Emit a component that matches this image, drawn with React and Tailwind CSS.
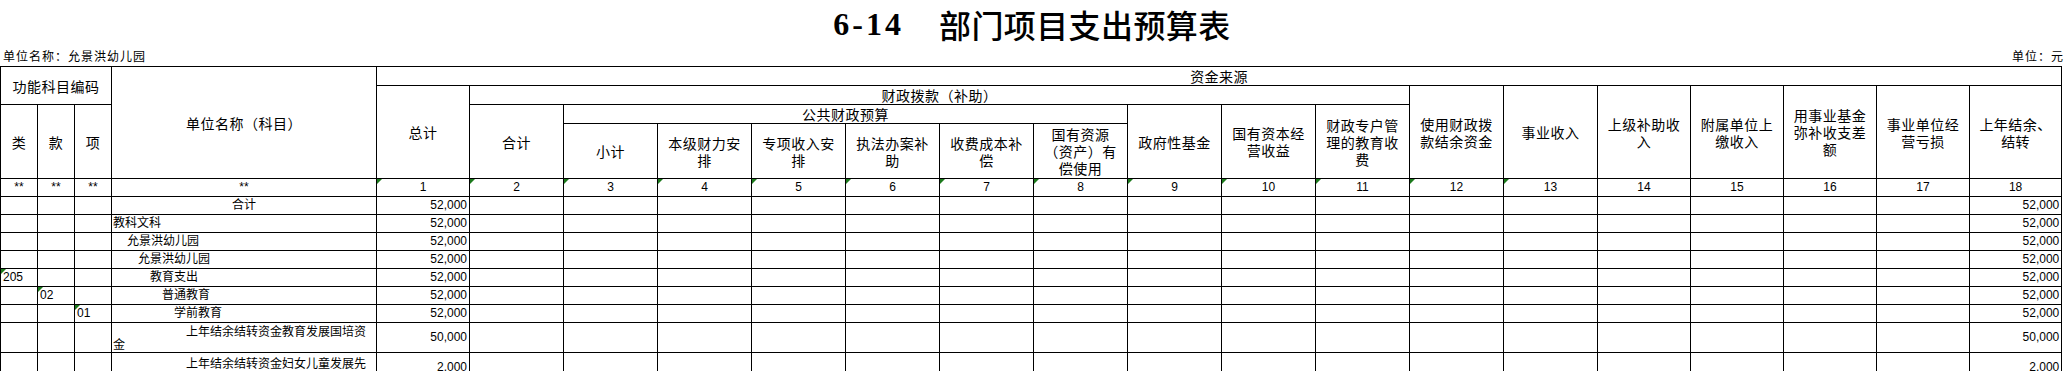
import React from 'react';

// column widths, left to right (功能科目 3 cols, 名称, 总计, then 2..18)
const widths = [
  'w-[37px]', 'w-[37px]', 'w-[37px]', 'w-[265px]', 'w-[93px]', 'w-[94px]',
  'w-[94px]', 'w-[94px]', 'w-[94px]', 'w-[94px]', 'w-[94px]', 'w-[94px]',
  'w-[94px]', 'w-[94px]', 'w-[94px]', 'w-[94px]', 'w-[94px]',
  'w-[93px]', 'w-[93px]', 'w-[93px]', 'w-[93px]', 'w-[92px]',
];

const H = 'border border-black p-0 text-center align-middle font-normal text-[14px] tracking-[0.5px]';
const H1 = `${H} pt-[3px] leading-[15px]`;
const HM = `${H} pt-[3px] leading-[17px]`;
const B = 'border border-black p-0 text-[12px] leading-[17px] align-middle';

const Flag = () => (
  <span className="absolute left-0 top-0 w-0 h-0 border-t-[5px] border-r-[5px] border-t-[#1c7a1c] border-r-transparent" />
);

const numRow = ['**', '**', '**', '**', '1', '2', '3', '4', '5', '6', '7', '8', '9', '10', '11', '12', '13', '14', '15', '16', '17', '18'];

const rows = [
  { name: '合计', pad: 'text-center', v: '52,000' },
  { name: '教科文科', pad: 'pl-[1px]', v: '52,000' },
  { name: '允景洪幼儿园', pad: 'pl-[15px]', v: '52,000' },
  { name: '允景洪幼儿园', pad: 'pl-[26px]', v: '52,000' },
  { code: ['205', '', ''], name: '教育支出', pad: 'pl-[38px]', v: '52,000' },
  { code: ['', '02', ''], name: '普通教育', pad: 'pl-[50px]', v: '52,000' },
  { code: ['', '', '01'], name: '学前教育', pad: 'pl-[62px]', v: '52,000' },
  { name: '上年结余结转资金教育发展国培资金', wrap: 'pt-[3px] leading-[13px]', v: '50,000' },
  { name: '上年结余结转资金妇女儿童发展先进集体奖励资金', wrap: 'pt-[4px] leading-[14px]', v: '2,000' },
];

const Row = ({ r }) => {
  const code = r.code || ['', '', ''];
  return (
    <tr className={r.wrap ? 'h-[30px]' : 'h-[17px]'}>
      {code.map((c, i) => (
        <td key={i} className={`${B} relative pl-[2px] text-left`}>
          {c && <Flag />}
          {c}
        </td>
      ))}
      {r.wrap ? (
        <td className={`${B} pl-[1px]`}>
          <div className={`h-[29px] indent-[73px] text-[12px] ${r.wrap}`}>{r.name}</div>
        </td>
      ) : (
        <td className={`${B} whitespace-nowrap ${r.pad}`}>{r.name}</td>
      )}
      <td className={`${B} text-right pr-[2px]`}>{r.v}</td>
      {Array.from({ length: 16 }).map((_, i) => (
        <td key={i} className={B} />
      ))}
      <td className={`${B} text-right pr-[2px]`}>{r.v}</td>
    </tr>
  );
};

export default function App() {
  return (
    <div className="w-[2064px] bg-white text-black font-['Liberation_Sans','Noto_Sans_CJK_SC',sans-serif]">
      <div className="h-[48px] flex items-center justify-center">
        <span className="font-['Liberation_Serif','Noto_Sans_CJK_SC',serif] font-bold text-[32px] leading-[48px] tracking-[3px]">6-14</span>
        <span className="ml-[35px] font-['Noto_Sans_CJK_SC',sans-serif] font-medium text-[32px] leading-[48px] tracking-[0.4px]">部门项目支出预算表</span>
      </div>
      <div className="h-[18px] flex items-center justify-between text-[12px] leading-[18px] tracking-[1px]">
        <span className="pl-[3px]">单位名称：允景洪幼儿园</span>
        <span>单位：元</span>
      </div>

      <table className="border-collapse table-fixed w-[2062px]">
        <colgroup>
          {widths.map((w, i) => (
            <col key={i} className={w} />
          ))}
        </colgroup>
        <tbody>
          <tr className="h-[18px]">
            <td colSpan={3} rowSpan={2} className={HM}>功能科目编码</td>
            <td rowSpan={4} className={HM}>单位名称（科目）</td>
            <td colSpan={18} className={H1}>资金来源</td>
          </tr>
          <tr className="h-[18px]">
            <td rowSpan={3} className={HM}>总计</td>
            <td colSpan={10} className={H1}>财政拨款（补助）</td>
            <td rowSpan={3} className={HM}>使用财政拨<br />款结余资金</td>
            <td rowSpan={3} className={HM}>事业收入</td>
            <td rowSpan={3} className={HM}>上级补助收<br />入</td>
            <td rowSpan={3} className={HM}>附属单位上<br />缴收入</td>
            <td rowSpan={3} className={HM}>用事业基金<br />弥补收支差<br />额</td>
            <td rowSpan={3} className={HM}>事业单位经<br />营亏损</td>
            <td rowSpan={3} className={HM}>上年结余、<br />结转</td>
          </tr>
          <tr className="h-[18px]">
            <td rowSpan={2} className={HM}>类</td>
            <td rowSpan={2} className={HM}>款</td>
            <td rowSpan={2} className={HM}>项</td>
            <td rowSpan={2} className={HM}>合计</td>
            <td colSpan={6} className={H1}>公共财政预算</td>
            <td rowSpan={2} className={HM}>政府性基金</td>
            <td rowSpan={2} className={HM}>国有资本经<br />营收益</td>
            <td rowSpan={2} className={HM}>财政专户管<br />理的教育收<br />费</td>
          </tr>
          <tr className="h-[54px]">
            <td className={HM}>小计</td>
            <td className={HM}>本级财力安<br />排</td>
            <td className={HM}>专项收入安<br />排</td>
            <td className={HM}>执法办案补<br />助</td>
            <td className={HM}>收费成本补<br />偿</td>
            <td className={HM}>国有资源<br />（资产）有<br />偿使用</td>
          </tr>
          <tr className="h-[17px]">
            {numRow.map((n, i) => (
              <td key={i} className={`${B} relative text-center`}>
                {i >= 4 && i <= 16 && <Flag />}
                {n}
              </td>
            ))}
          </tr>
          {rows.map((r, i) => (
            <Row key={i} r={r} />
          ))}
        </tbody>
      </table>
    </div>
  );
}
